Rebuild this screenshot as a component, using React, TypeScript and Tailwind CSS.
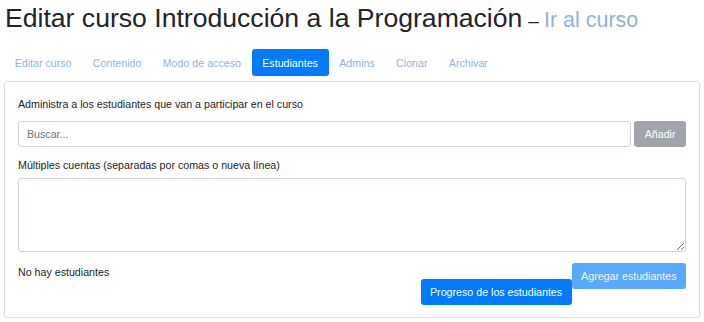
import { useState } from "react";

const tabs = ["Editar curso", "Contenido", "Modo de acceso", "Estudiantes", "Admins", "Clonar", "Archivar"];

export default function App() {
  const [active, setActive] = useState("Estudiantes");
  const [search, setSearch] = useState("");
  const [bulk, setBulk] = useState("");

  return (
    <div
      className="min-h-screen bg-white px-[4px] text-[#212529]"
      style={{ fontFamily: '"Liberation Sans", Arial, sans-serif' }}
    >
      {/* Title */}
      <h1 className="flex items-baseline pl-[1px] text-[26.6px] leading-[36px] font-normal">
        <span>Editar curso Introducción a la Programación</span>
        <span className="ml-[6px] text-[19px]">–</span>
        <a href="#" className="ml-[5px] text-[21.5px] text-[#8fb4dc]">
          Ir al curso
        </a>
      </h1>

      {/* Tabs */}
      <nav className="mt-[10px] flex text-[10.67px]">
        {tabs.map((t) => (
          <button
            key={t}
            onClick={() => setActive(t)}
            className={
              t === active
                ? "h-[27px] rounded-[3px] bg-[#007bff] px-[10.67px] text-white"
                : "h-[27px] rounded-[3px] px-[10.67px] text-[#8fb4dc]"
            }
          >
            {t}
          </button>
        ))}
      </nav>

      {/* Card */}
      <div className="mt-[5px] h-[237px] rounded-[3px] border border-[#dfdfdf] px-[13px] pt-[14px] text-[10.67px]">
        <p className="leading-[16px]">Administra a los estudiantes que van a participar en el curso</p>

        <div className="mt-[9px] flex gap-[3px]">
          <input
            value={search}
            onChange={(e) => setSearch(e.target.value)}
            placeholder="Buscar..."
            className="h-[26px] flex-1 rounded-[3px] border border-[#ced4da] px-[8px] text-[10.67px] placeholder-[#6c757d] outline-none"
          />
          <button className="h-[26px] rounded-[3px] bg-[#9fa5aa] px-[10.5px] text-[10.67px] text-white">Añadir</button>
        </div>

        <p className="mt-[10px] leading-[16px]">Múltiples cuentas (separadas por comas o nueva línea)</p>

        <textarea
          value={bulk}
          onChange={(e) => setBulk(e.target.value)}
          className="mt-[5px] block h-[74px] w-full rounded-[3px] border border-[#ced4da] px-[8px] py-[4px] text-[10.67px] outline-none"
        />

        <div className="mt-[11px] flex items-start">
          <p className="mt-[1px] flex-1 leading-[16px]">No hay estudiantes</p>
          <button className="mt-[16px] h-[26px] rounded-[3px] bg-[#007bff] px-[9.5px] text-[10.67px] text-white">
            Progreso de los estudiantes
          </button>
          <button className="h-[26px] rounded-[3px] bg-[#59a9ff] px-[9.5px] text-[10.67px] text-[#eef6ff]">
            Agregar estudiantes
          </button>
        </div>
      </div>
    </div>
  );
}
